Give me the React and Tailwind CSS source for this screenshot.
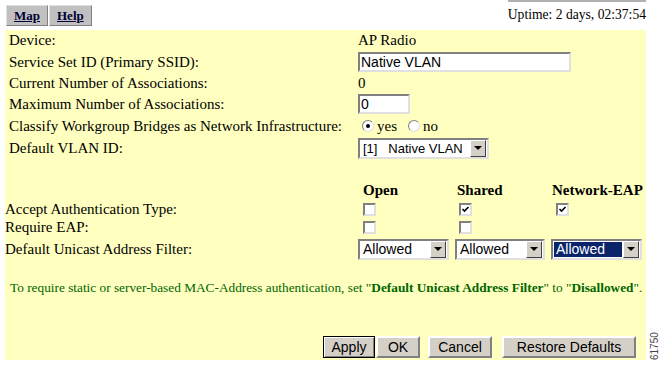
import { useState } from "react";

const serif = { fontFamily: '"Liberation Serif", "Times New Roman", serif' };
const sans = { fontFamily: '"Liberation Sans", Arial, sans-serif' };

const FIELDS = [
  { label: "Device:", h: "h-[19px]" },
  { label: "Service Set ID (Primary SSID):", h: "h-[24px]" },
  { label: "Current Number of Associations:", h: "h-[18px]" },
  { label: "Maximum Number of Associations:", h: "h-[24px]" },
  { label: "Classify Workgroup Bridges as Network Infrastructure:", h: "h-[20px]" },
  { label: "Default VLAN ID:", h: "h-[24px]" },
];

function SelectBox({ value, width, highlight, small }) {
  return (
    <div className={`flex h-[21px] items-center bg-white border-2 border-t-[#808080] border-l-[#808080] border-b-[#e0e0e0] border-r-[#e0e0e0] ${width}`}>
      <div className="flex-1 h-full p-[1px] overflow-hidden">
        <div
          className={`h-full flex items-center pl-[2px] leading-none whitespace-nowrap ${small ? "text-[13px]" : "text-[14px]"} ${
            highlight ? "bg-[#0a246a] text-white outline outline-1 outline-dotted outline-[#ffffff]" : "text-black"
          }`}
          style={sans}
        >
          {value}
        </div>
      </div>
      <div className="w-[16px] h-[17px] mr-[1px] bg-[#d4d0c8] border border-t-white border-l-white border-b-[#404040] border-r-[#404040] flex items-center justify-center shrink-0">
        <span className="block w-0 h-0 border-x-[4px] border-x-transparent border-t-[4px] border-t-black" />
      </div>
    </div>
  );
}

function Check({ checked }) {
  return (
    <div className="w-[13px] h-[13px] bg-white border-2 border-t-[#808080] border-l-[#808080] border-b-[#e0e0e0] border-r-[#e0e0e0] flex items-center justify-center">
      {checked && (
        <svg width="9" height="9" viewBox="0 0 9 9">
          <path d="M1.5 4 L3.5 6 L7.5 2" stroke="black" strokeWidth="1.6" fill="none" />
        </svg>
      )}
    </div>
  );
}

function Radio({ on }) {
  return (
    <span className="inline-flex w-[12px] h-[12px] rounded-full bg-white border border-t-[#808080] border-l-[#808080] border-b-[#e0e0e0] border-r-[#e0e0e0] items-center justify-center">
      {on && <span className="w-[4px] h-[4px] rounded-full bg-black" />}
    </span>
  );
}

function WinButton({ children, width, focused }) {
  return (
    <button
      className={`h-[22px] ${width} bg-[#d4d0c8] text-[14px] text-black flex items-center justify-center ${
        focused
          ? "border border-black shadow-[inset_1px_1px_0_#fff,inset_-1px_-1px_0_#808080]"
          : "border-2 border-t-white border-l-white border-b-[#808080] border-r-[#808080]"
      }`}
      style={sans}
    >
      {children}
    </button>
  );
}

export default function App() {
  const [ssid, setSsid] = useState("Native VLAN");
  const [maxAssoc, setMaxAssoc] = useState("0");

  return (
    <div className="w-[664px] h-[368px] bg-white overflow-hidden relative text-black" style={serif}>
      {/* Top bar */}
      <div className="flex items-start justify-between pl-[6px] pr-[18px] pt-[5px] h-[30px]">
        <div className="flex gap-[1px]">
          {["Map", "Help"].map((t) => (
            <div
              key={t}
              className="h-[21px] px-[7px] bg-[#c0c0c0] border border-t-[#e0e0e0] border-l-[#e0e0e0] border-b-[#808080] border-r-[#808080] flex items-center text-[13px] font-bold underline text-[#000033]"
            >
              {t}
            </div>
          ))}
        </div>
        <div className="flex flex-col items-end">
          <div className="w-[138px] h-[2px] bg-[#b0b0b0] -mt-[5px]" />
          <div className="text-[13.6px] mt-[6px] leading-none">Uptime: 2 days, 02:37:54</div>
        </div>
      </div>

      {/* Yellow panel */}
      <div className="ml-[5px] w-[641px] h-[330px] bg-[#ffffc0] flex flex-col text-[15px] leading-none">
        <div className="pt-[1px] pl-[4px]">
          {FIELDS.map((f, i) => (
            <div key={f.label} className={`flex items-center ${f.h}`}>
              <div className="w-[349px] whitespace-nowrap">{f.label}</div>
              <div className="flex items-center">
                {i === 0 && <span>AP Radio</span>}
                {i === 1 && (
                  <input
                    value={ssid}
                    onChange={(e) => setSsid(e.target.value)}
                    className="w-[213px] h-[20px] bg-white border-2 border-t-[#808080] border-l-[#808080] border-b-[#e0e0e0] border-r-[#e0e0e0] px-[1px] text-[14px] outline-none"
                    style={sans}
                  />
                )}
                {i === 2 && <span>0</span>}
                {i === 3 && (
                  <input
                    value={maxAssoc}
                    onChange={(e) => setMaxAssoc(e.target.value)}
                    className="w-[52px] h-[20px] bg-white border-2 border-t-[#808080] border-l-[#808080] border-b-[#e0e0e0] border-r-[#e0e0e0] px-[1px] text-[14px] outline-none"
                    style={sans}
                  />
                )}
                {i === 4 && (
                  <span className="flex items-center ml-[4px] gap-[3px]">
                    <Radio on />
                    <span className="mr-[8px]">yes</span>
                    <Radio />
                    <span>no</span>
                  </span>
                )}
                {i === 5 && <SelectBox value={"[1]\u00a0\u00a0\u00a0Native VLAN"} width="w-[131px]" small />}
              </div>
            </div>
          ))}
        </div>

        {/* Authentication table */}
        <div className="mt-[20px]">
          <div className="flex items-center h-[20px] font-bold">
            <div className="w-[358px]" />
            <div className="w-[94px]">Open</div>
            <div className="w-[95px]">Shared</div>
            <div className="whitespace-nowrap">Network-EAP</div>
          </div>
          {[
            ["Accept Authentication Type:", [false, true, true]],
            ["Require EAP:", [false, false, null]],
          ].map(([label, checks]) => (
            <div key={label} className="flex items-center h-[18px]">
              <div className="w-[358px]">{label}</div>
              {checks.map((c, j) => (
                <div key={j} className={j === 0 ? "w-[96px]" : j === 1 ? "w-[97px]" : ""}>
                  {c !== null && <Check checked={c} />}
                </div>
              ))}
            </div>
          ))}
          <div className="flex items-center h-[24px] mt-[1px]">
            <div className="w-[353px]">Default Unicast Address Filter:</div>
            <div className="flex gap-[6px]">
              <SelectBox value="Allowed" width="w-[91px]" />
              <SelectBox value="Allowed" width="w-[90px]" />
              <SelectBox value="Allowed" width="w-[91px]" highlight />
            </div>
          </div>
        </div>

        <div className="mt-[20px] pl-[5px] text-[13.3px] text-[#006600] whitespace-nowrap">
          To require static or server-based MAC-Address authentication, set "<b>Default Unicast Address Filter</b>" to "
          <b>Disallowed</b>".
        </div>

        <div className="mt-auto mb-[2px] flex justify-end pr-[10px] gap-[1px]">
          <WinButton width="w-[52px]" focused>Apply</WinButton>
          <WinButton width="w-[44px]">OK</WinButton>
          <div className="w-[6px]" />
          <WinButton width="w-[64px]">Cancel</WinButton>
          <div className="w-[8px]" />
          <WinButton width="w-[134px]">Restore Defaults</WinButton>
        </div>
      </div>

      <div
        className="absolute left-[647px] top-[328px] text-[10px] text-[#444] -rotate-90 origin-top-left translate-y-[32px]"
        style={sans}
      >
        61750
      </div>
    </div>
  );
}
